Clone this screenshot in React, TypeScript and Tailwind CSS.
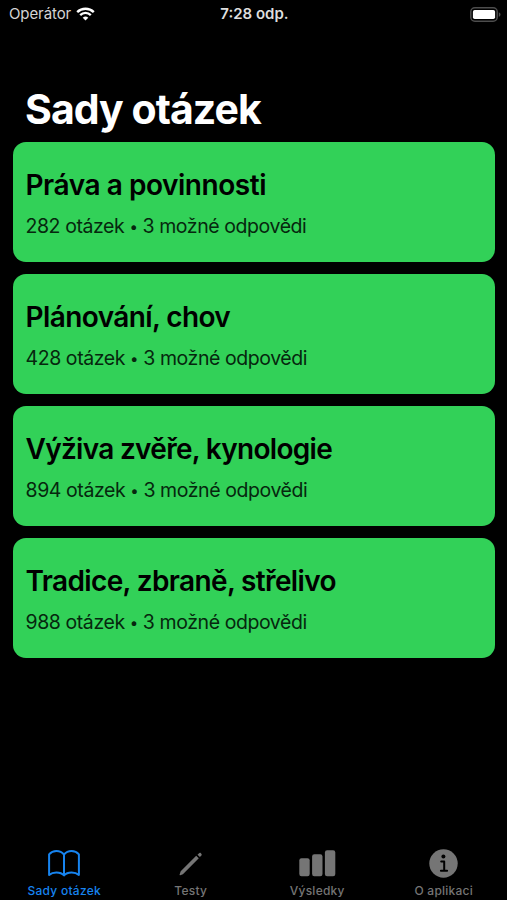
import React from "react";

const sets = [
    {
        title: "Práva a povinnosti",
        count: 282,
        titleClass: "tracking-[-0.45px]",
    },
    {
        title: "Plánování, chov",
        count: 428,
        titleClass: "tracking-[-0.6px]",
    },
    {
        title: "Výživa zvěře, kynologie",
        count: 894,
        titleClass: "tracking-[-0.7px]",
    },
    {
        title: "Tradice, zbraně, střelivo",
        count: 988,
        titleClass: "tracking-[-0.63px]",
    },
];

const WifiIcon = () => (
    <svg width="19" height="14" viewBox="0 0 19 14" fill="none">
        <path d="M1.2 5.1a11.8 11.8 0 0 1 16.6 0" stroke="white" strokeWidth="2.4" />
        <path d="M4.2 8.1a7.5 7.5 0 0 1 10.6 0" stroke="white" strokeWidth="2.3" />
        <path d="M9.5 13.6 6.7 10.8a4 4 0 0 1 5.6 0z" fill="white" />
    </svg>
);

const BatteryIcon = () => (
    <svg width="31" height="15" viewBox="0 0 31 15" fill="none">
        <rect x="0.8" y="0.8" width="26.4" height="13.4" rx="4" stroke="#4d4d4d" strokeWidth="1.5" />
        <rect x="2.9" y="2.9" width="22.2" height="9.2" rx="1.8" fill="white" />
        <path d="M28.8 5.2c1.1.4 1.7 1.3 1.7 2.3s-.6 1.9-1.7 2.3z" fill="#4d4d4d" />
    </svg>
);

const BookIcon = () => (
    <svg width="32" height="27" viewBox="0 0 32 27" fill="none">
        <path
            d="M16 25.4V4.6C14.3 2.5 11.6 1.1 8.4 1.1c-3.1 0-5.500 1.200-7.300 3.200v20.600c1.800-1.600 4.400-2.500 7.300-2.500 3.100 0 5.800.9 7.600 3 1.800-2.100 4.500-3 7.600-3 2.900 0 5.500.9 7.300 2.500V4.300c-1.800-2-4.200-3.200-7.300-3.200-3.200 0-5.900 1.400-7.600 3.500"
            stroke="currentColor"
            strokeWidth="2"
            strokeLinejoin="round"
        />
    </svg>
);

const PencilIcon = () => (
    <svg width="24" height="24" viewBox="0 0 24 24" fill="currentColor">
        <path d="M17.2 3.7 19.800 6.300 3.900 22.200 1.300 23.300c-.5.200-.9-.2-.7-.7L1.700 19.200z" />
        <path d="m18.500 2.700 1.300-1.300c.7-.7 1.500-.7 2.100-.1l.4.4c.6.6.6 1.400-.1 2.100l-1.300 1.300z" />
    </svg>
);

const BarsIcon = () => (
    <svg width="37" height="27" viewBox="0 0 37 27" fill="currentColor">
        <rect x="0.3" y="8.3" width="10.400" height="18" rx="2.200" />
        <rect x="13.100" y="4.300" width="10.400" height="22" rx="2.200" />
        <rect x="25.900" y="0.300" width="10.400" height="26" rx="2.200" />
    </svg>
);

const InfoIcon = () => (
    <svg width="29" height="29" viewBox="0 0 29 29">
        <circle cx="14.500" cy="14.500" r="14.200" fill="currentColor" />
        <circle cx="14.400" cy="7.400" r="2" fill="black" />
        <path
            d="M12.200 12.600h3v9M11.900 21.700h6.200"
            fill="none"
            stroke="black"
            strokeWidth="2"
            strokeLinecap="round"
            strokeLinejoin="round"
        />
    </svg>
);

const tabs = [
    { label: "Sady otázek", icon: <BookIcon />, active: true },
    { label: "Testy", icon: <PencilIcon />, active: false },
    { label: "Výsledky", icon: <BarsIcon />, active: false },
    { label: "O aplikaci", icon: <InfoIcon />, active: false },
];

const App = () => {
    return (
        <div className="flex h-[900px] w-[507px] flex-col overflow-hidden bg-black font-['Inter',sans-serif]">
            <header className="grid h-7 grid-cols-3 items-center pl-[9px] pr-[6px]">
                <div className="flex items-center gap-[5px] text-[#d4d4d4]">
                    <span className="text-[15px] tracking-[-0.1px]">Operátor</span>
                    <WifiIcon />
                </div>
                <p className="pr-px text-center text-[15px] font-semibold text-[#dedede]">
                    7:28 odp.
                </p>
                <div className="flex justify-end">
                    <BatteryIcon />
                </div>
            </header>
            <main className="flex flex-1 flex-col pl-[13px] pr-[12.5px] pt-[56px]">
                <h1 className="h-[58px] pl-3 text-[41px] font-bold leading-[50px] tracking-[-0.95px] text-white">
                    Sady otázek
                </h1>
                <div className="flex flex-col gap-3">
                    {sets.map((item) => (
                        <div
                            key={item.title}
                            className="flex h-[120px] flex-col rounded-[13px] bg-[#32d158] pl-[12.5px] pt-[25px] text-black"
                        >
                            <h2
                                className={`text-[28px] font-semibold leading-[36px] ${item.titleClass}`}
                            >
                                {item.title}
                            </h2>
                            <p className="mt-[10px] text-[19.5px] leading-[26px] tracking-[-0.42px] text-[#06270e]">
                                {item.count} otázek{" "}
                                <span className="relative -top-px text-[15px]">•</span> 3
                                možné odpovědi
                            </p>
                        </div>
                    ))}
                </div>
            </main>
            <nav className="grid h-[54px] grid-cols-4 pl-px">
                {tabs.map((tab) => (
                    <div
                        key={tab.label}
                        className={`flex flex-col items-center ${
                            tab.active ? "text-[#1784f0]" : "text-[#757575]"
                        }`}
                    >
                        <div className="flex h-[35px] items-center">{tab.icon}</div>
                        <span className="text-[12px] font-medium leading-[20px] tracking-[0.25px]">
                            {tab.label}
                        </span>
                    </div>
                ))}
            </nav>
        </div>
    );
};

export default App;
